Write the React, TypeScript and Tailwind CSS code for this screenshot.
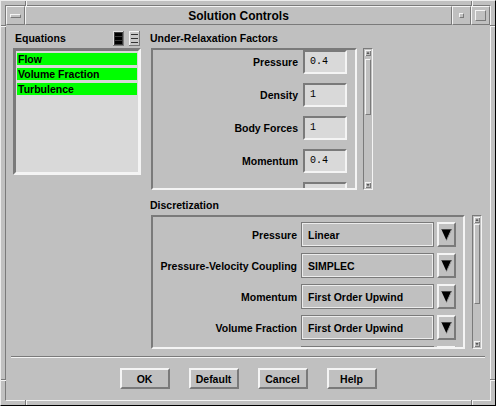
import React from 'react';

const raised = 'border-t-[#f4f4f4] border-l-[#f4f4f4] border-r-[#7a7a7a] border-b-[#7a7a7a]';
const sunken = 'border-t-[#7a7a7a] border-l-[#7a7a7a] border-r-[#f4f4f4] border-b-[#f4f4f4]';

function ScrollBar({ height, thumbTop, thumbHeight }: { height: number; thumbTop: number; thumbHeight: number }) {
  return (
    <div className={`relative w-[10px] border ${sunken}`} style={{ height }}>
      {/* up arrow */}
      <svg className="absolute left-[1px] top-[1px]" width="6" height="6" viewBox="0 0 6 6">
        <rect x="0" y="0" width="6" height="6" fill="#c0c0c0" />
        <path d="M0 5.5 H6 M5.5 0 V6" stroke="#7a7a7a" />
        <path d="M0 0.5 H6 M0.5 0 V6" stroke="#f4f4f4" />
        <path d="M3 1.5 L4.5 4 H1.5 Z" fill="#555" />
      </svg>
      <div
        className={`absolute left-[1px] w-[6px] border ${raised} bg-[#c0c0c0]`}
        style={{ top: thumbTop, height: thumbHeight }}
      />
      {/* down arrow */}
      <svg className="absolute left-[1px] bottom-[1px]" width="6" height="6" viewBox="0 0 6 6">
        <rect x="0" y="0" width="6" height="6" fill="#c0c0c0" />
        <path d="M0 5.5 H6 M5.5 0 V6" stroke="#7a7a7a" />
        <path d="M0 0.5 H6 M0.5 0 V6" stroke="#f4f4f4" />
        <path d="M1.5 2 H4.5 L3 4.5 Z" fill="#555" />
      </svg>
    </div>
  );
}

function FactorRow({ label, value }: { label: string; value: string }) {
  return (
    <div className="flex items-center justify-end h-[24px] shrink-0">
      {label && <span className="mr-[5px] whitespace-nowrap">{label}</span>}
      <div
        className={`w-[44px] h-[24px] border-2 ${sunken} bg-[#d9d9d9] flex items-center pl-[5px] font-normal text-[10px]`}
        style={{ fontFamily: '"Liberation Mono", "DejaVu Sans Mono", monospace' }}
      >
        {value}
      </div>
    </div>
  );
}

function OptionRow({ label, value }: { label: string; value: string }) {
  return (
    <div className="flex items-center justify-end h-[25px] shrink-0">
      {label && <span className="mr-[4px] whitespace-nowrap">{label}</span>}
      <div className="w-[133px] h-[25px] border border-[#7a7a7a] shadow-[inset_-1px_-1px_0_#ececec,inset_1px_1px_0_#ececec] flex items-center pl-[6px]">
        {value}
      </div>
      <div className={`ml-[3px] w-[19px] h-[25px] border-2 ${raised} flex items-center justify-center`}>
        <svg width="11" height="12" viewBox="0 0 11 12">
          <path d="M0.5 0.5 H10.5 L5.5 11.5 Z" fill="#000" />
          <path d="M10.5 0.5 L5.5 11.5" stroke="#9a9a9a" strokeWidth="1" />
          <path d="M0.5 0.5 H10.5" stroke="#444" strokeWidth="1" />
        </svg>
      </div>
    </div>
  );
}

function PushButton({ label }: { label: string }) {
  return (
    <div className={`w-[50px] h-[21px] border-2 ${raised} flex items-center justify-center`}>
      {label}
    </div>
  );
}

export default function App() {
  const font = { fontFamily: '"Liberation Sans", Arial, sans-serif' };
  return (
    <div
      className="relative w-[496px] h-[406px] bg-[#c0c0c0] border border-t-[#ececec] border-l-[#ececec] border-r-black border-b-black p-[4px] text-black font-bold text-[10.5px] leading-[12px]"
      style={font}
    >
      {/* frame resize notches */}
      <div className="absolute left-[24px] top-0 w-[2px] h-[5px] border-l border-l-[#7a7a7a] border-r border-r-[#f4f4f4]" />
      <div className="absolute left-[470px] top-0 w-[2px] h-[5px] border-l border-l-[#7a7a7a] border-r border-r-[#f4f4f4]" />
      <div className="absolute left-[24px] bottom-0 w-[2px] h-[5px] border-l border-l-[#7a7a7a] border-r border-r-[#f4f4f4]" />
      <div className="absolute left-[470px] bottom-0 w-[2px] h-[5px] border-l border-l-[#7a7a7a] border-r border-r-[#f4f4f4]" />
      <div className="absolute left-0 top-[24px] w-[5px] h-[2px] border-t border-t-[#7a7a7a] border-b border-b-[#f4f4f4]" />
      <div className="absolute left-0 top-[378px] w-[5px] h-[2px] border-t border-t-[#7a7a7a] border-b border-b-[#f4f4f4]" />
      <div className="absolute right-0 top-[24px] w-[5px] h-[2px] border-t border-t-[#7a7a7a] border-b border-b-[#f4f4f4]" />
      <div className="absolute right-0 top-[378px] w-[5px] h-[2px] border-t border-t-[#7a7a7a] border-b border-b-[#f4f4f4]" />

      <div className={`h-full border ${sunken} flex flex-col`}>
        {/* title bar */}
        <div className="flex h-[19px] shrink-0">
          <div className={`w-[19px] h-full border ${raised} flex items-center justify-center`}>
            <div className={`w-[11px] h-[4px] border ${raised}`} />
          </div>
          <div className={`flex-1 h-full border ${raised} flex items-center justify-center text-[12px]`}>
            Solution Controls
          </div>
          <div className={`w-[19px] h-full border ${raised} flex items-center justify-center`}>
            <div className={`w-[5px] h-[5px] border ${raised}`} />
          </div>
          <div className={`w-[19px] h-full border ${raised} flex items-center justify-center`}>
            <div className={`w-[11px] h-[11px] border ${raised}`} />
          </div>
        </div>

        {/* body */}
        <div className="flex-1 flex flex-col">
          <div className="flex pl-[7px] h-[324px]">
            {/* equations */}
            <div className="w-[128px] flex flex-col">
              <div className="h-[23px] flex items-end justify-between pb-[2px] pl-[2px]">
                <span className="mb-[2px]">Equations</span>
                <div className="flex gap-[5px] mr-[1px]">
                  <svg width="11" height="15" viewBox="0 0 11 15">
                    <rect x="0" y="0" width="11" height="15" fill="#3a3a3a" />
                    <path d="M0 0.5 H11 M0.5 0 V15" stroke="#e0e0e0" />
                    <path d="M0 14.5 H11 M10.5 0 V15" stroke="#7a7a7a" />
                    <rect x="2" y="2" width="7" height="3" fill="#000" />
                    <rect x="2" y="6" width="7" height="3" fill="#000" />
                    <rect x="2" y="10" width="7" height="3" fill="#000" />
                  </svg>
                  <svg width="11" height="15" viewBox="0 0 11 15">
                    <rect x="0" y="0" width="11" height="15" fill="#c8c8c8" />
                    <path d="M0 0.5 H11 M0.5 0 V15" stroke="#f4f4f4" />
                    <path d="M0 14.5 H11 M10.5 0 V15" stroke="#7a7a7a" />
                    <path d="M2 3.5 H9 M2 7.5 H9 M2 11.5 H9" stroke="#333" />
                  </svg>
                </div>
              </div>
              <div className={`h-[127px] border-[3px] ${sunken} bg-[#d9d9d9] pt-[2px] px-[1px] flex flex-col gap-[3px]`}>
                {['Flow', 'Volume Fraction', 'Turbulence'].map((t) => (
                  <div key={t} className="h-[12px] bg-[#00ff00] pl-[1px] leading-[12px]">
                    {t}
                  </div>
                ))}
              </div>
            </div>

            {/* right side */}
            <div className="ml-[9px] flex flex-col">
              <div className="h-[23px] flex items-end pb-[4px]">Under-Relaxation Factors</div>
              <div className="flex">
                <div className={`ml-[1px] w-[206px] h-[142px] border-2 ${sunken} overflow-hidden flex flex-col gap-[9px] pr-[8px]`}>
                  <FactorRow label="Pressure" value="0.4" />
                  <FactorRow label="Density" value="1" />
                  <FactorRow label="Body Forces" value="1" />
                  <FactorRow label="Momentum" value="0.4" />
                  {/* next row, scrolled out of view */}
                  <FactorRow label="" value="" />
                </div>
                <div className="ml-[6px]">
                  <ScrollBar height={142} thumbTop={10} thumbHeight={56} />
                </div>
              </div>

              <div className="h-[25px] flex items-end pb-[4px]">Discretization</div>
              <div className="flex">
                <div className={`ml-[1px] w-[314px] h-[134px] border-2 ${sunken} overflow-hidden flex flex-col gap-[6px] pt-[5px] pr-[7px]`}>
                  <OptionRow label="Pressure" value="Linear" />
                  <OptionRow label="Pressure-Velocity Coupling" value="SIMPLEC" />
                  <OptionRow label="Momentum" value="First Order Upwind" />
                  <OptionRow label="Volume Fraction" value="First Order Upwind" />
                  {/* next row, scrolled out of view */}
                  <OptionRow label="" value="" />
                </div>
                <div className="ml-[7px]">
                  <ScrollBar height={134} thumbTop={8} thumbHeight={80} />
                </div>
              </div>
            </div>
          </div>

          {/* separator */}
          <div className="mt-[7px] mx-[5px] h-[2px] border-t border-t-[#7a7a7a] border-b border-b-[#f4f4f4]" />

          {/* buttons */}
          <div className="mt-[10px] flex justify-center gap-[19px]">
            <PushButton label="OK" />
            <PushButton label="Default" />
            <PushButton label="Cancel" />
            <PushButton label="Help" />
          </div>
        </div>
      </div>
    </div>
  );
}
